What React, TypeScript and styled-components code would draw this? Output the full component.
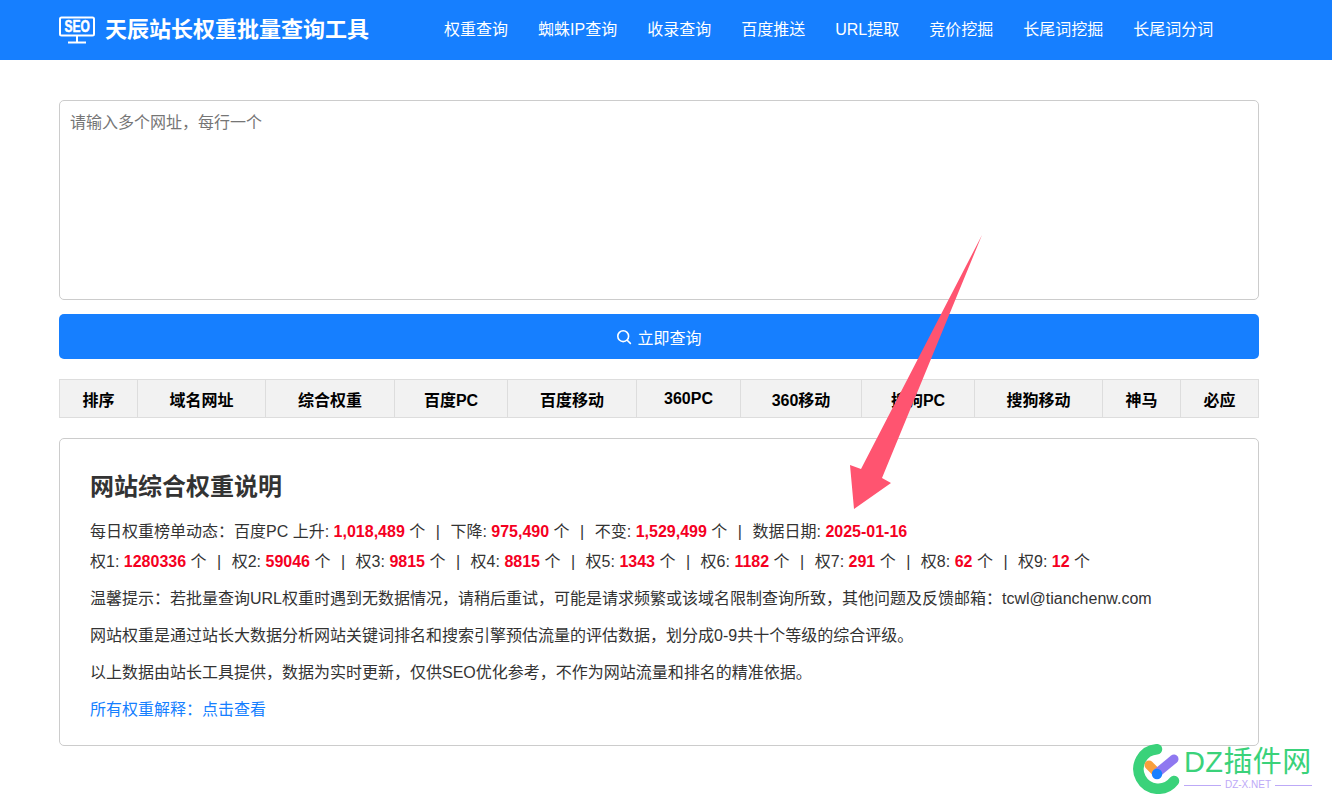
import styled, { createGlobalStyle } from 'styled-components';

const GlobalStyle = createGlobalStyle`
  * {
    box-sizing: border-box;
  }

  html,
  body {
    margin: 0;
    padding: 0;
    background: #fff;
    color: #333;
    font-family: 'Liberation Sans', 'Noto Sans CJK SC', sans-serif;
  }
`;

// full-width punctuation used in the Chinese copy
const COMMA = '\uFF0C';
const COLON = '\uFF1A';

const navItems = [
  '权重查询',
  '蜘蛛IP查询',
  '收录查询',
  '百度推送',
  'URL提取',
  '竞价挖掘',
  '长尾词挖掘',
  '长尾词分词',
];

const columns = [
  { label: '排序', width: 78 },
  { label: '域名网址', width: 128 },
  { label: '综合权重', width: 129 },
  { label: '百度PC', width: 113 },
  { label: '百度移动', width: 129 },
  { label: '360PC', width: 104 },
  { label: '360移动', width: 121 },
  { label: '搜狗PC', width: 113 },
  { label: '搜狗移动', width: 128 },
  { label: '神马', width: 78 },
  { label: '必应', width: 78 },
];

const rankStats = [
  ['权1', '1280336'],
  ['权2', '59046'],
  ['权3', '9815'],
  ['权4', '8815'],
  ['权5', '1343'],
  ['权6', '1182'],
  ['权7', '291'],
  ['权8', '62'],
  ['权9', '12'],
];

const notes = [
  `温馨提示${COLON}若批量查询URL权重时遇到无数据情况${COMMA}请稍后重试${COMMA}可能是请求频繁或该域名限制查询所致${COMMA}其他问题及反馈邮箱${COLON}tcwl@tianchenw.com`,
  `网站权重是通过站长大数据分析网站关键词排名和搜索引擎预估流量的评估数据${COMMA}划分成0-9共十个等级的综合评级。`,
  `以上数据由站长工具提供${COMMA}数据为实时更新${COMMA}仅供SEO优化参考${COMMA}不作为网站流量和排名的精准依据。`,
];

const SeoLogo = () => (
  <svg width="36" height="28" viewBox="0 0 36 28" fill="none">
    <rect x="1" y="1.5" width="34" height="18" rx="1.5" stroke="#fff" strokeWidth="2" />
    <path d="M18 20v6M9 26.5h18" stroke="#fff" strokeWidth="2" />
    <text
      transform="translate(5.5 16) scale(1 1.3)"
      fill="#fff"
      stroke="#fff"
      strokeWidth="0.4"
      fontFamily="Liberation Sans, sans-serif"
      fontSize="12"
      fontWeight="700"
    >
      SEO
    </text>
  </svg>
);

const SearchIcon = () => (
  <svg width="16" height="16" viewBox="0 0 16 16" fill="none">
    <circle cx="7.2" cy="7.2" r="5.4" stroke="#fff" strokeWidth="1.6" />
    <path d="M11.2 11.2l3.2 3.2" stroke="#fff" strokeWidth="1.6" strokeLinecap="round" />
  </svg>
);

const Arrow = () => (
  <ArrowSvg width="142" height="276" viewBox="850 235 142 276">
    <polygon points="982,235 882,478 891,483 854,509 850,465 861,469" fill="#ff5470" />
  </ArrowSvg>
);

const Watermark = () => (
  <WatermarkBox>
    <svg width="52" height="50" viewBox="0 0 52 50" fill="none">
      <path
        d="M27 5.2A19.8 19.8 0 1 0 44 37"
        stroke="#3ad27a"
        strokeWidth="10.5"
        strokeLinecap="round"
      />
      <path d="M19 21l8 8" stroke="#f9a03c" strokeWidth="9" strokeLinecap="round" />
      <path d="M27 29l17-14" stroke="#8f78f0" strokeWidth="9" strokeLinecap="round" />
      <circle cx="27" cy="30" r="5.2" fill="#1780ff" />
    </svg>
    <WatermarkText>
      <WatermarkName>DZ插件网</WatermarkName>
      <WatermarkSub>DZ-X.NET</WatermarkSub>
    </WatermarkText>
  </WatermarkBox>
);

export default function App() {
  return (
    <>
      <GlobalStyle />
      <Page>
        <Header>
          <HeaderInner>
            <Brand>
              <SeoLogo />
              <BrandName>天辰站长权重批量查询工具</BrandName>
            </Brand>
            <Nav>
              {navItems.map((item) => (
                <NavLink key={item} href="#">
                  {item}
                </NavLink>
              ))}
            </Nav>
          </HeaderInner>
        </Header>

        <Main>
          <UrlInput placeholder={`请输入多个网址${COMMA}每行一个`} />
          <SearchButton type="button">
            <SearchIcon />
            立即查询
          </SearchButton>

          <ResultHead>
            {columns.map((col) => (
              <HeadCell key={col.label} $width={col.width}>
                {col.label}
              </HeadCell>
            ))}
          </ResultHead>

          <Card>
            <CardTitle>网站综合权重说明</CardTitle>
            <StatLine>
              每日权重榜单动态{COLON}百度PC 上升: <Num>1,018,489</Num> 个<Sep>|</Sep>下降:{' '}
              <Num>975,490</Num> 个<Sep>|</Sep>不变: <Num>1,529,499</Num> 个<Sep>|</Sep>
              数据日期: <Num>2025-01-16</Num>
            </StatLine>
            <StatLine>
              {rankStats.map(([name, value], i) => (
                <span key={name}>
                  {name}: <Num>{value}</Num> 个{i < rankStats.length - 1 && <Sep>|</Sep>}
                </span>
              ))}
            </StatLine>
            {notes.map((note) => (
              <Note key={note}>{note}</Note>
            ))}
            <Note>
              <MoreLink href="#">所有权重解释{COLON}点击查看</MoreLink>
            </Note>
          </Card>
        </Main>

        <Arrow />
        <Watermark />
      </Page>
    </>
  );
}

const Page = styled.div`
  position: relative;
  width: 1332px;
  height: 809px;
  overflow: hidden;
`;

const Header = styled.header`
  height: 60px;
  background: #167fff;
`;

const HeaderInner = styled.div`
  display: flex;
  align-items: center;
  width: 1200px;
  height: 100%;
  margin-left: 59px;
`;

const Brand = styled.div`
  display: flex;
  align-items: center;
  gap: 10px;
  width: 385px;
`;

const BrandName = styled.div`
  color: #fff;
  font-size: 22px;
  font-weight: 700;
  line-height: 30px;
`;

const Nav = styled.nav`
  display: flex;
  gap: 30px;
`;

const NavLink = styled.a`
  color: #fff;
  font-size: 16px;
  line-height: 60px;
  text-decoration: none;
`;

const Main = styled.main`
  width: 1200px;
  margin-left: 59px;
  padding-top: 40px;
`;

const UrlInput = styled.textarea`
  display: block;
  width: 100%;
  height: 200px;
  padding: 10px;
  border: 1px solid #ccc;
  border-radius: 5px;
  outline: none;
  resize: none;
  font-family: inherit;
  font-size: 16px;
  line-height: 24px;

  &::placeholder {
    color: #757575;
  }
`;

const SearchButton = styled.button`
  display: flex;
  align-items: center;
  justify-content: center;
  gap: 5px;
  width: 100%;
  height: 45px;
  margin-top: 14px;
  border: 0;
  border-radius: 5px;
  background: #167fff;
  color: #fff;
  font-family: inherit;
  font-size: 16px;
`;

const ResultHead = styled.div`
  display: flex;
  height: 39px;
  margin-top: 20px;
  border: 1px solid #ddd;
  border-right: 0;
  background: #f2f2f2;
`;

const HeadCell = styled.div<{ $width: number }>`
  display: flex;
  flex: none;
  align-items: center;
  justify-content: center;
  width: ${(p) => p.$width}px;
  border-right: 1px solid #ddd;
  color: #000;
  font-size: 16px;
  font-weight: 700;
`;

const Card = styled.section`
  height: 308px;
  margin-top: 20px;
  padding: 30px;
  border: 1px solid #ccc;
  border-radius: 5px;
`;

const CardTitle = styled.h2`
  margin: 0 0 13px;
  color: #333;
  font-size: 24px;
  font-weight: 700;
  line-height: 35px;
`;

const StatLine = styled.div`
  font-size: 16px;
  line-height: 30px;
  white-space: nowrap;
`;

const Num = styled.b`
  color: #f5001f;
  font-weight: 700;
`;

const Sep = styled.span`
  margin: 0 10.5px;
`;

const Note = styled.p`
  margin: 7px 0 0;
  font-size: 16px;
  line-height: 30px;
  white-space: nowrap;
`;

const MoreLink = styled.a`
  color: #167fff;
  text-decoration: none;
`;

const ArrowSvg = styled.svg`
  position: absolute;
  left: 850px;
  top: 235px;
`;

const WatermarkBox = styled.div`
  position: absolute;
  left: 1130px;
  top: 744px;
  display: flex;
  gap: 2px;
`;

const WatermarkText = styled.div`
  display: flex;
  flex-direction: column;
  width: 128px;
`;

const WatermarkName = styled.div`
  color: #3ad27a;
  font-size: 29px;
  letter-spacing: 0.4px;
  line-height: 36px;
  white-space: nowrap;
`;

const WatermarkSub = styled.div`
  display: flex;
  align-items: center;
  gap: 4px;
  margin-top: -1px;
  color: #bda9f7;
  font-size: 10px;
  line-height: 12px;

  &::before,
  &::after {
    content: '';
    flex: 1;
    height: 1px;
    background: #bda9f7;
  }
`;
